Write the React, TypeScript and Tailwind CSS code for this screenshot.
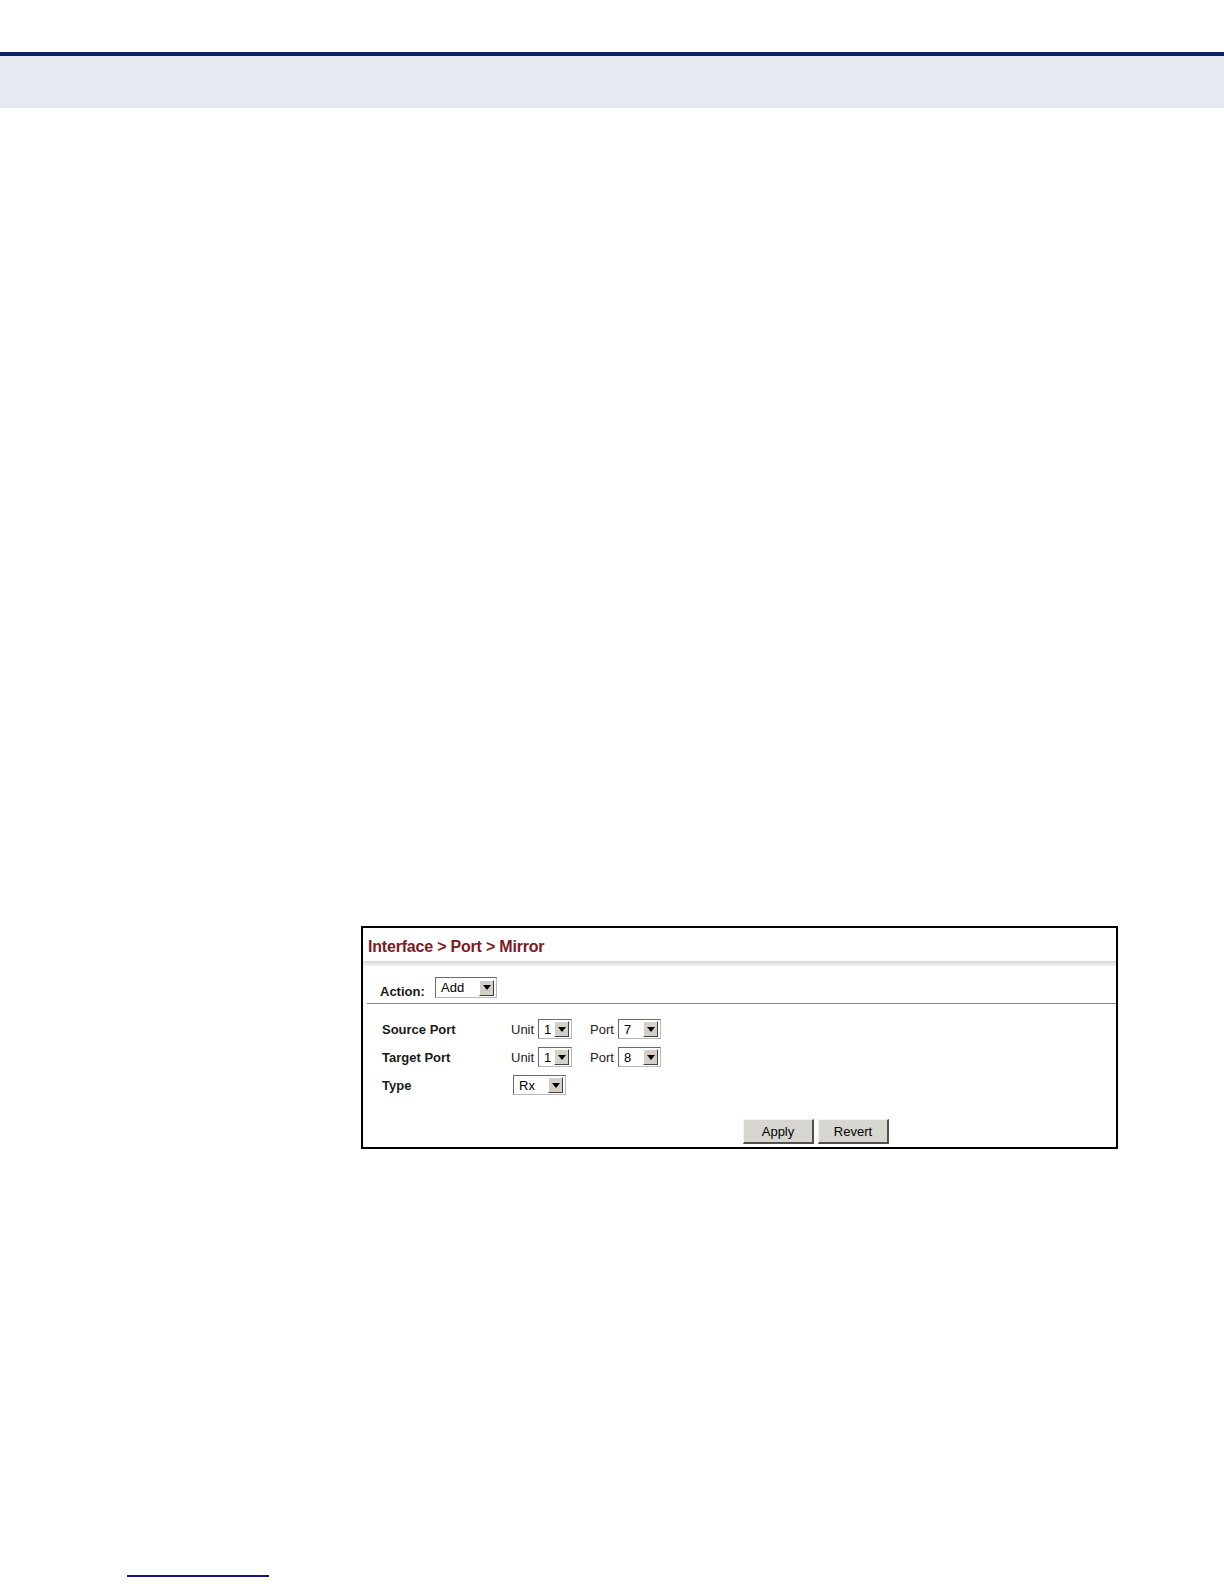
import React from "react";

const font = { fontFamily: '"Liberation Sans", Arial, sans-serif' };

function Arrow() {
  return (
    <div className="flex h-[16px] w-[15px] items-center justify-center border-t border-l border-b border-r border-t-white border-l-white border-b-[#404040] border-r-[#404040] bg-[#d4d0c8]">
      <svg width="8" height="5" viewBox="0 0 8 5">
        <path d="M0 0 L8 0 L4 5 Z" fill="#000" />
      </svg>
    </div>
  );
}

function Select({ value, w, h = 20 }: { value: string; w: string; h?: number }) {
  return (
    <div
      className={`${w} flex items-center justify-between border border-t-[#6a6a6a] border-l-[#6a6a6a] border-b-[#b8b8b8] border-r-[#b8b8b8] bg-white pl-[5px] pr-[2px] text-[13px] leading-[15px] text-black`}
      style={{ height: h }}
    >
      <span>{value}</span>
      <Arrow />
    </div>
  );
}

function Button({ label }: { label: string }) {
  return (
    <div className="flex h-[25px] w-[71px] items-center justify-center border-t border-l border-t-[#f4f4f4] border-l-[#f4f4f4] border-r-2 border-b-2 border-r-[#505050] border-b-[#505050] bg-[#d8d6d0] text-[13px] leading-[15px] text-black">
      {label}
    </div>
  );
}

export default function App() {
  return (
    <div className="flex h-[1584px] w-[1224px] flex-col bg-white" style={font}>
      <div className="h-[52px] shrink-0" />
      <div className="h-[4px] shrink-0 bg-[#0b2461]" />
      <div className="h-[52px] shrink-0 bg-[#e5e9f0]" />
      <div className="h-[818px] shrink-0" />

      <div className="ml-[361px] flex h-[223px] w-[757px] shrink-0 flex-col border-2 border-black">
        <div className="h-[33px] shrink-0 pl-[5px] pt-[10px] text-[16px] font-bold leading-[18px] tracking-[-0.2px] text-[#7d1a1f]">
          Interface &gt; Port &gt; Mirror
        </div>
        <div className="h-[5px] shrink-0 bg-gradient-to-b from-[#d6d6d6] to-[#f4f4f4]" />
        <div className="flex h-[37px] shrink-0 items-start pl-[17px]">
          <div className="mt-[18px] w-[55px] text-[13px] font-bold leading-[15px] text-[#1a1a1a]">Action:</div>
          <div className="mt-[11px]">
            <Select value="Add" w="w-[62px]" h={21} />
          </div>
        </div>
        <div className="ml-[4px] h-px shrink-0 bg-[#8a8a8a]" />

        <div className="flex flex-col gap-[8px] pl-[19px] pt-[15px]">
          <div className="flex h-[20px] items-center">
            <div className="w-[129px] text-[13px] font-bold leading-[15px] text-[#1a1a1a]">Source Port</div>
            <span className="w-[27px] text-[13px] leading-[15px] text-[#222]">Unit</span>
            <Select value="1" w="w-[34px]" />
            <span className="ml-[18px] w-[28px] text-[13px] leading-[15px] text-[#222]">Port</span>
            <Select value="7" w="w-[43px]" />
          </div>
          <div className="flex h-[20px] items-center">
            <div className="w-[129px] text-[13px] font-bold leading-[15px] text-[#1a1a1a]">Target Port</div>
            <span className="w-[27px] text-[13px] leading-[15px] text-[#222]">Unit</span>
            <Select value="1" w="w-[34px]" />
            <span className="ml-[18px] w-[28px] text-[13px] leading-[15px] text-[#222]">Port</span>
            <Select value="8" w="w-[43px]" />
          </div>
          <div className="flex h-[20px] items-center">
            <div className="w-[131px] text-[13px] font-bold leading-[15px] text-[#1a1a1a]">Type</div>
            <Select value="Rx" w="w-[53px]" />
          </div>
        </div>

        <div className="mt-[24px] flex gap-[4px] pl-[380px]">
          <Button label="Apply" />
          <Button label="Revert" />
        </div>
      </div>

      <div className="h-[426px] shrink-0" />
      <div className="ml-[127px] h-[2px] w-[142px] shrink-0 bg-[#16167e]" />
    </div>
  );
}
